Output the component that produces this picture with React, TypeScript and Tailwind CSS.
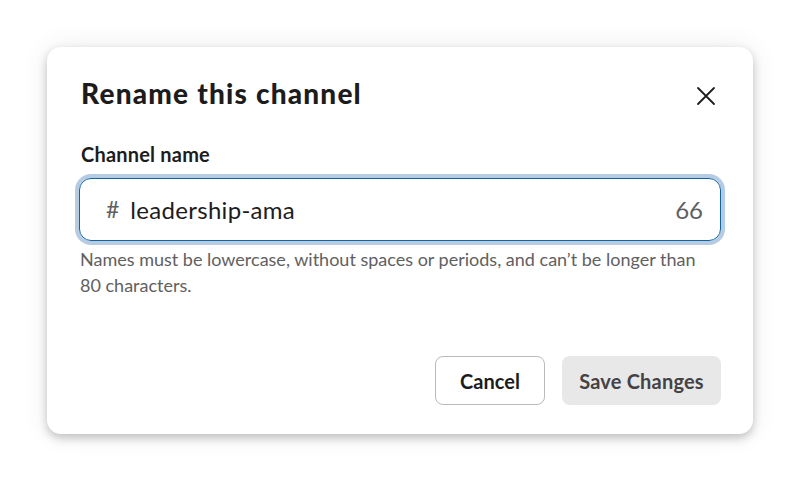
import { useState } from "react";

const MAX_LENGTH = 80;

function CloseIcon() {
  return (
    <svg width="20" height="20" viewBox="0 0 20 20" fill="none" stroke="#1d1c1d" strokeWidth="1.8" strokeLinecap="round">
      <path d="M2 2 L18 18 M18 2 L2 18" />
    </svg>
  );
}

export default function App(): React.ReactElement {
  const [name, setName] = useState("leadership-ama");
  const remaining = MAX_LENGTH - name.length;

  return (
    <div className="flex h-[480px] w-[800px] items-start bg-white pl-[47px] pt-[47px] font-['Lato','Liberation_Sans',sans-serif]">
      <div className="flex h-[387px] w-[706px] flex-col rounded-[14px] bg-white px-8 shadow-[0_4px_10px_rgba(0,0,0,0.22),0_0_28px_rgba(0,0,0,0.08)]">
        <div className="flex items-center justify-between pt-[26px]">
          <h1 className="pl-[2px] text-[28px] font-black leading-[40px] tracking-[1.2px] text-[#1d1c1d]">
            Rename this channel
          </h1>
          <button type="button" className="-mr-[1px] mt-[5px] flex h-8 w-8 items-center justify-center">
            <CloseIcon />
          </button>
        </div>

        <label className="mt-[29px] pl-[2px] text-[20px] font-bold leading-[24px] tracking-[0.2px] text-[#1d1c1d]">
          Channel name
        </label>

        <div className="mt-[12px] flex h-[63px] items-center rounded-[12px] border border-[#1264a3] px-[26px] ring-4 ring-[#b5cce3]">
          <span className="mr-[11px] text-[23px] text-[#616061]">#</span>
          <input
            value={name}
            onChange={(e) => setName(e.target.value)}
            className="min-w-0 flex-1 bg-transparent text-[24px] tracking-[0.3px] text-[#1d1c1d] outline-none"
          />
          <span className="-mr-[9px] text-[24px] text-[#616061]">{remaining}</span>
        </div>

        <p className="mt-[5px] pl-[1px] pr-[12px] text-[18px] leading-[26px] text-[#616061]">
          Names must be lowercase, without spaces or periods, and can’t be longer than 80 characters.
        </p>

        <div className="mt-auto mb-[29px] flex justify-end gap-[17px]">
          <button
            type="button"
            className="h-[49px] w-[110px] rounded-[8px] border border-[#bbbabb] text-[20px] font-bold text-[#1d1c1d]"
          >
            Cancel
          </button>
          <button
            type="button"
            className="h-[49px] w-[159px] rounded-[8px] bg-[#e8e8e8] text-[20px] font-bold tracking-[0.2px] text-[#454245]"
          >
            Save Changes
          </button>
        </div>
      </div>
    </div>
  );
}
